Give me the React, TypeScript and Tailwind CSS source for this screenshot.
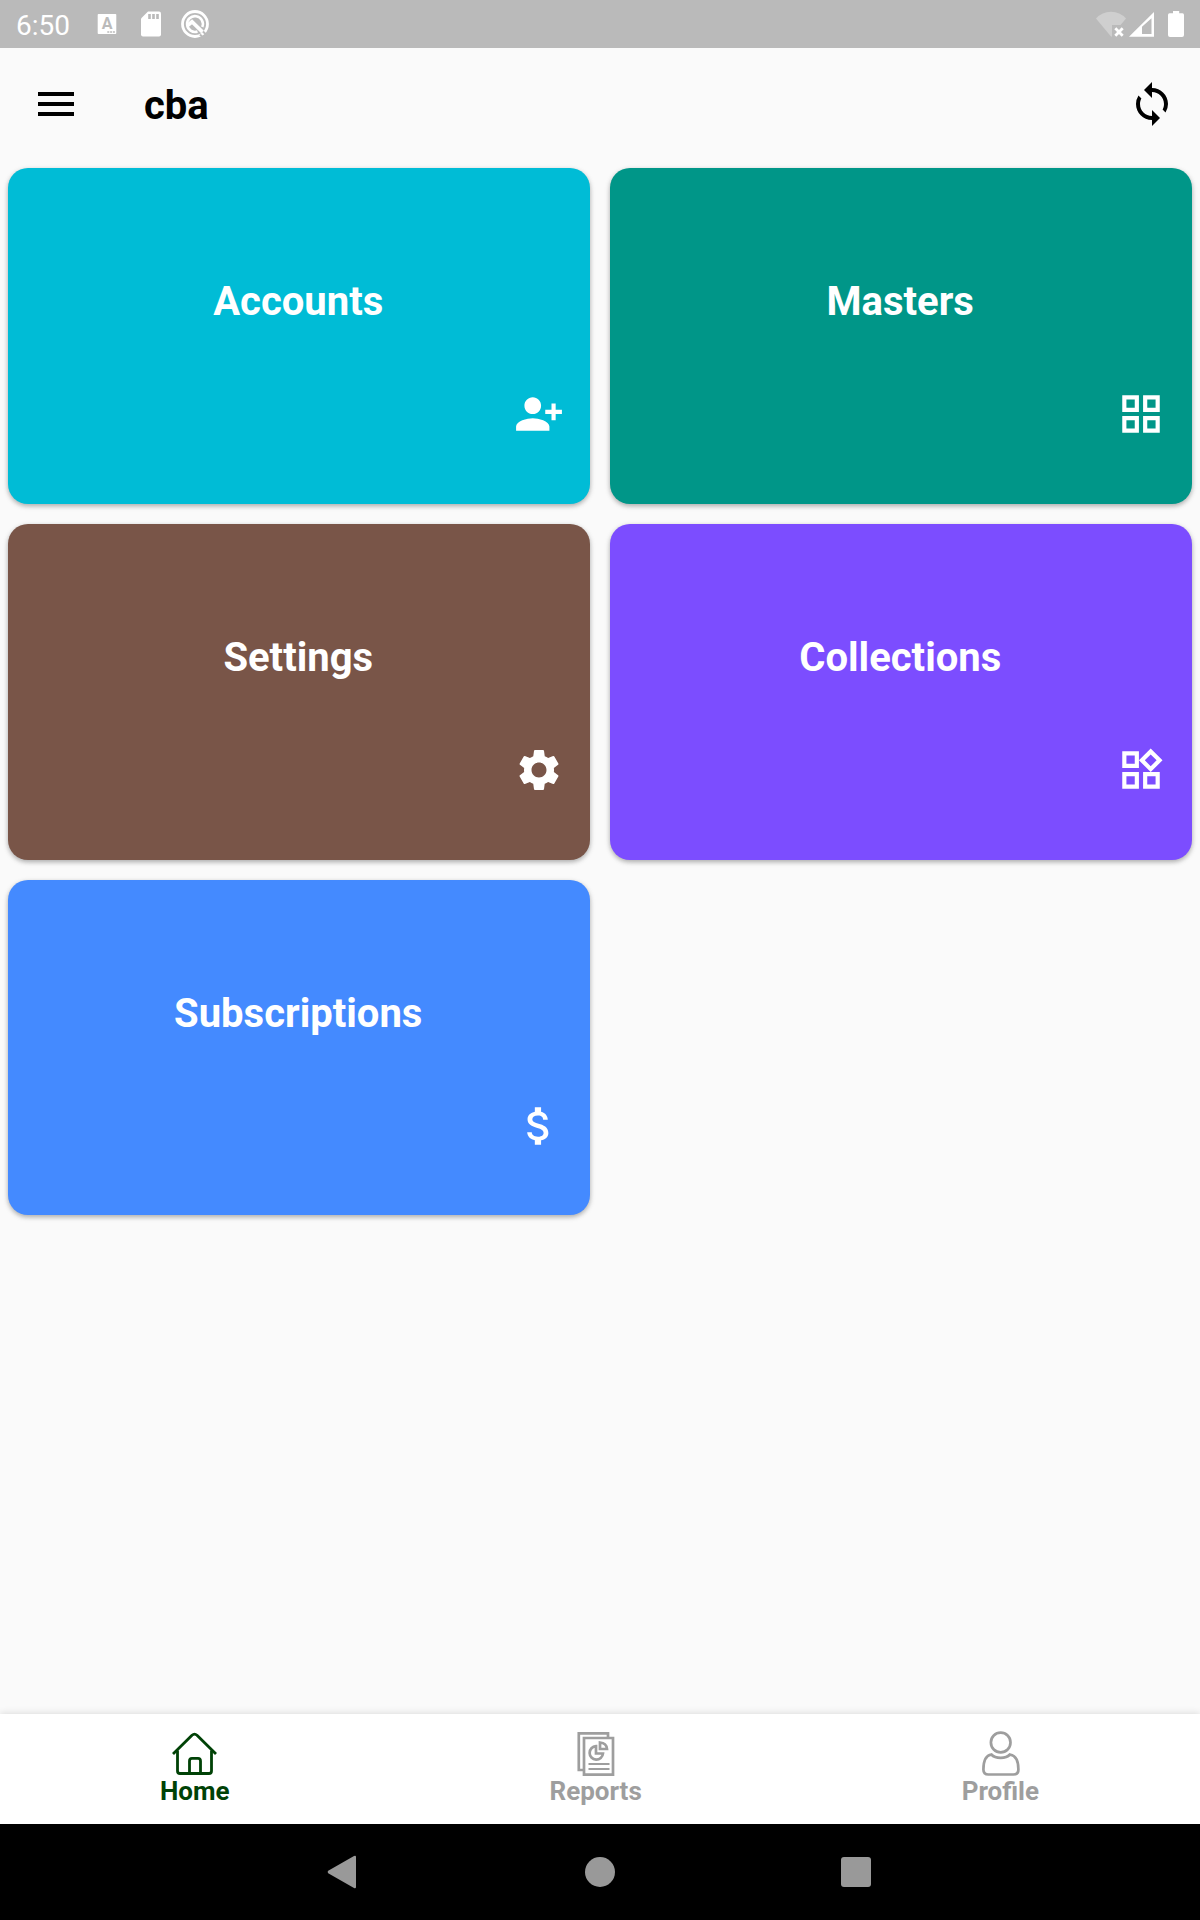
import type { ReactNode } from "react";
import {
  MdAttachMoney,
  MdMenu,
  MdOutlineGridView,
  MdOutlineWidgets,
  MdPersonAddAlt1,
  MdSettings,
  MdSync,
} from "react-icons/md";

const tiles = [
  { title: "Accounts", color: "bg-[#00bcd6]", icon: MdPersonAddAlt1 },
  { title: "Masters", color: "bg-[#009688]", icon: MdOutlineGridView },
  { title: "Settings", color: "bg-[#795548]", icon: MdSettings },
  { title: "Collections", color: "bg-[#7c4dff]", icon: MdOutlineWidgets },
  { title: "Subscriptions", color: "bg-[#448aff]", icon: MdAttachMoney },
];

function StatusBar() {
  return (
    <div className="flex h-12 shrink-0 items-center bg-[#bababa] pl-4 pr-4 text-white">
      <span className="w-[81px] pt-[3px] text-[28px] leading-none">6:50</span>
      <svg className="h-12 w-[20px]" viewBox="97 0 20 48">
        <path fill="white" d="M98.500 14H115.500Q116.300 14 116.300 15V33Q116.300 34 115.500 34H98.500Q97.700 34 97.700 33V15Q97.700 14 98.500 14Z" />
        <text x="107" y="29.300" textAnchor="middle" fontSize="16" fontWeight="700" fill="#bababa">A</text>
        <path stroke="#bababa" strokeWidth="1.700" strokeDasharray="2 0.800" d="M107.300 32H115" />
      </svg>
      <svg className="ml-[24px] h-12 w-[20px]" viewBox="141 0 20 48">
        <path fill="white" d="M148 11.500H159Q161 11.500 161 13.500V34.500Q161 36.500 159 36.500H143Q141 36.500 141 34.500V18.500Z" />
        <path stroke="#bababa" strokeWidth="2.600" d="M149.500 14V19M153.500 14V19M157.500 14V19" />
      </svg>
      <svg className="ml-[20px] h-12 w-[28px]" viewBox="181 0 28 48">
        <circle cx="195" cy="24" r="12.500" fill="none" stroke="white" strokeWidth="2.800" />
        <path fill="none" stroke="white" strokeWidth="2.600" d="M202.300 27A7.900 7.900 0 1 0 197.500 31.500" />
        <path fill="none" stroke="white" strokeWidth="3.800" d="M187.500 25.500L192 21.700L202.500 32" />
        <path stroke="#bababa" strokeWidth="2" d="M200 34.500L203.500 38M203 31.500L206.500 35" />
      </svg>
      <svg className="ml-auto h-12 w-[30px]" viewBox="1096 0 30 48">
        <path fill="#cfcfcf" d="M1096 18.500Q1102 11.700 1111 11.700T1126 18.500L1120.500 25H1112V36.500L1111 36.500Z" />
        <path stroke="white" strokeWidth="2.800" d="M1115.300 28.300L1122.700 35.700M1122.700 28.300L1115.300 35.700" />
      </svg>
      <svg className="ml-[3px] h-12 w-[25px]" viewBox="1129 0 25 48">
        <path fill="white" fillRule="evenodd" d="M1129 36.700L1154 12V36.700ZM1142 26.700V34H1151.500V18.200Z" />
      </svg>
      <svg className="ml-[14px] h-12 w-[16px]" viewBox="1168 0 16 48">
        <path fill="white" d="M1173 11H1179.200V13.300H1182.500Q1184 13.300 1184 15V35Q1184 37 1182 37H1170Q1168 37 1168 35V15Q1168 13.300 1169.500 13.300H1173Z" />
      </svg>
    </div>
  );
}

function HomeIcon() {
  return (
    <svg className="h-12 w-12" viewBox="0.500 0 48 48" fill="none" stroke="currentColor" strokeWidth="2.800" strokeLinejoin="round">
      <path d="M2.500 24L21.500 5.200Q24 3 26.500 5.200L45.500 24" />
      <path d="M7 20.500V41Q7 43.500 9.500 43.500H38.500Q41 43.500 41 41V20.500" />
      <path d="M19 43V31Q19 28.300 21.500 28.300H27.500Q30 28.300 30 31V43" />
    </svg>
  );
}

function ReportsIcon() {
  return (
    <svg className="h-12 w-12" viewBox="0.500 0 48 48" fill="none" stroke="currentColor" strokeWidth="2.700">
      <path d="M36.500 7V3.300H7.300V40H12.500" />
      <path d="M12.500 8H41.500V44.700H12.500Z" />
      <path strokeWidth="2" d="M17 34H38M17 39H38" />
      <path d="M24.500 16.200A6.700 6.700 0 1 0 31.500 23.500H24.500Z" />
      <path d="M28.500 12.500V19H35.500Q35 13 28.500 12.500Z" />
    </svg>
  );
}

function ProfileIcon() {
  return (
    <svg className="h-12 w-12" viewBox="0 0 48 48" fill="none" stroke="currentColor" strokeWidth="2.700">
      <circle cx="24.700" cy="12.500" r="9.800" />
      <path d="M15.400 24.500C19.400 29 29.900 29 33.900 24.500C39.900 25.500 42.400 32 42.400 39.500Q42.400 44.500 37.400 44.500H12.400Q7.400 44.500 7.400 39.500C7.400 32 9.400 25.500 15.400 24.500Z" />
    </svg>
  );
}

function NavItem({ label, active, children }: { label: string; active?: boolean; children: ReactNode }) {
  return (
    <button
      className={
        active
          ? "flex flex-col items-center pt-4 text-[#004206]"
          : "flex flex-col items-center pt-4 text-[#9e9e9e]"
      }
    >
      {children}
      <span className="-mt-0.5 text-[26px] font-bold leading-[30px]">{label}</span>
    </button>
  );
}

export default function App() {
  return (
    <div className="flex h-[1920px] w-[1200px] flex-col overflow-hidden bg-[#fafafa] font-['Roboto',sans-serif]">
      <StatusBar />

      <header className="flex h-28 shrink-0 items-center px-6 pl-8 text-black">
        <MdMenu className="size-12" />
        <h1 className="ml-16 pt-[3px] text-[40px] font-bold leading-none">cba</h1>
        <MdSync className="ml-auto size-12" />
      </header>

      <main className="grid flex-1 auto-rows-[335.8px] grid-cols-2 content-start gap-5 px-2 pt-2">
        {tiles.map(({ title, color, icon: Icon }) => (
          <section
            key={title}
            className={`${color} flex flex-col rounded-[20px] pt-[110px] text-white shadow-[0_2px_4px_rgba(0,0,0,0.22),0_2px_6px_rgba(0,0,0,0.12)]`}
          >
            <h2 className="pr-[1.500px] text-center text-[40px] font-bold leading-[47px]">{title}</h2>
            <Icon className="mr-[26px] mt-16 size-[50px] self-end" />
          </section>
        ))}
      </main>

      <nav className="flex h-[110px] shrink-0 justify-around bg-white pr-px shadow-[0_-1px_7px_rgba(0,0,0,0.12)]">
        <NavItem label="Home" active>
          <HomeIcon />
        </NavItem>
        <NavItem label="Reports">
          <ReportsIcon />
        </NavItem>
        <NavItem label="Profile">
          <ProfileIcon />
        </NavItem>
      </nav>

      <div className="flex h-24 shrink-0 items-center justify-center gap-52 bg-black text-[#999999]">
        <svg className="size-12" viewBox="0 0 48 48" fill="currentColor">
          <path d="M8.200 22.800L34 8Q36 7.200 36 9V39Q36 40.800 34 40L8.200 25.200Q7 24 8.200 22.800Z" />
        </svg>
        <div className="flex size-12 items-center justify-center">
          <div className="size-[29.500px] rounded-full bg-[#999999]" />
        </div>
        <div className="flex size-12 items-center justify-center">
          <div className="size-[30px] rounded-[3px] bg-[#999999]" />
        </div>
      </div>
    </div>
  );
}
